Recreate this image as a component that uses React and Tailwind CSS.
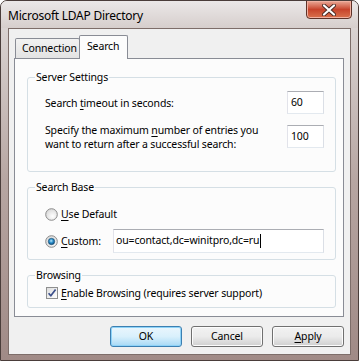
import React from "react";

const font = { fontFamily: '"Noto Sans", "Open Sans", Arial, sans-serif' };
const T = "text-[10.5px] tracking-[-0.15px] text-black";

function Radio({ checked }) {
  return (
    <svg width="13" height="13" viewBox="0 0 13 13" className="shrink-0">
      <defs>
        <radialGradient id={checked ? "rg1" : "rg0"} cx="0.6" cy="0.65" r="0.7">
          <stop offset="0" stopColor="#ffffff" />
          <stop offset="1" stopColor="#d6d6d6" />
        </radialGradient>
        <radialGradient id="rdot" cx="0.45" cy="0.4" r="0.6">
          <stop offset="0" stopColor="#b8e6fb" />
          <stop offset="0.5" stopColor="#2a8fcb" />
          <stop offset="1" stopColor="#0d4a7a" />
        </radialGradient>
      </defs>
      <circle cx="6.5" cy="6.5" r="5.8" fill={`url(#${checked ? "rg1" : "rg0"})`} stroke="#8a8a8a" strokeWidth="1" />
      {checked && <circle cx="6.5" cy="6.5" r="3.2" fill="url(#rdot)" stroke="#1b4f73" strokeWidth="0.6" />}
    </svg>
  );
}

function Checkbox() {
  return (
    <svg width="12" height="12" viewBox="0 0 12 12" className="shrink-0">
      <defs>
        <linearGradient id="cbg" x1="0" y1="0" x2="1" y2="1">
          <stop offset="0" stopColor="#dcdcdc" />
          <stop offset="1" stopColor="#ffffff" />
        </linearGradient>
      </defs>
      <rect x="0.5" y="0.5" width="11" height="11" fill="url(#cbg)" stroke="#8e8f8f" />
      <path d="M2.6 6.2 L4.8 8.8 L9.6 2.4" fill="none" stroke="#3b4f8a" strokeWidth="1.7" strokeLinejoin="round" />
    </svg>
  );
}

function Group({ title, className, children }) {
  return (
    <div className={`flex flex-col border border-[#d5dfe5] rounded-[3px] ${className}`}>
      <span className={`-mt-[8px] ml-[7px] self-start px-[1px] bg-[#fcfcfc] leading-[15px] ${T}`}>{title}</span>
      {children}
    </div>
  );
}

function Button({ children, def }) {
  return (
    <div
      className={`w-[72px] h-[21px] flex items-center justify-center rounded-[3px] border ${T} ${
        def
          ? "border-[#3c7fb1] bg-gradient-to-b from-[#eaf6fd] via-[#d9f0fc] to-[#a7d9f5] shadow-[inset_0_0_0_1px_#8ed3f8]"
          : "border-[#707070] bg-gradient-to-b from-[#f2f2f2] via-[#ebebeb] to-[#cfcfcf] shadow-[inset_0_0_0_1px_#fcfcfc]"
      }`}
    >
      {children}
    </div>
  );
}

const INPUT =
  "border border-[#abadb3] border-l-[#e2e3ea] border-b-[#e3e9ef] border-r-[#dbdfe6] bg-white flex items-center";

export default function App() {
  return (
    <div
      className="w-[359px] h-[361px] flex flex-col border border-[#4a3d3a] rounded-t-[7px] bg-gradient-to-b from-[#e0dbda] via-[#b7a6a2] to-[#a08a86] overflow-hidden"
      style={font}
    >
      <div className="h-[27px] shrink-0 flex items-start justify-between bg-gradient-to-b from-[#ebe8e8] to-[#d6cecc]">
        <span className="pl-[7px] pt-[6px] text-[12px] tracking-[-0.25px] leading-[17px] text-black">
          Microsoft LDAP Directory
        </span>
        <div className="mr-[6px] -mt-[1px] w-[46px] h-[19px] rounded-b-[4px] border border-[#5e3228] bg-gradient-to-b from-[#e9a897] via-[#c7432b] to-[#d9714d] flex items-center justify-center shadow-[inset_0_0_0_1px_#f0b0a0]">
          <svg width="14" height="12" viewBox="0 0 14 12">
            <path d="M2 1.5 L12 10.5 M12 1.5 L2 10.5" stroke="#4a2a24" strokeWidth="4" strokeLinecap="round" />
            <path d="M2 1.5 L12 10.5 M12 1.5 L2 10.5" stroke="#ffffff" strokeWidth="2.2" strokeLinecap="round" />
          </svg>
        </div>
      </div>

      <div className="mx-[7px] h-[327px] shrink-0 flex flex-col border border-[#7d6d69] bg-[#f0f0f0]">
        <div className="ml-[5px] mr-[6px] mt-[6px] flex flex-col">
          <div className="flex items-end pl-[1px] h-[23px]">
            <div className={`w-[65px] h-[20px] border border-b-0 border-[#898c95] rounded-t-[2px] bg-gradient-to-b from-[#f2f2f2] to-[#e3e3e3] flex items-center pl-[6px] ${T}`}>
              Connection
            </div>
            <div className={`relative z-10 -ml-[1px] -mb-[1px] w-[49px] h-[24px] border border-b-0 border-[#898c95] rounded-t-[2px] bg-[#fcfcfc] flex items-center pl-[7px] pb-[2px] ${T}`}>
              Search
            </div>
          </div>

          <div className="h-[259px] border border-[#898c95] bg-[#fcfcfc] flex flex-col pl-[12px] pr-[7px] pt-[18px]">
            <Group title="Server Settings" className="h-[95px]">
              <div className="mt-[6px] flex items-center justify-between pl-[17px] pr-[11px] h-[23px]">
                <span className={`leading-[14px] ${T}`}>
                  Search <u className="underline-offset-2">t</u>imeout in seconds:
                </span>
                <div className={`w-[37px] h-[23px] pl-[3px] ${INPUT} ${T}`}>60</div>
              </div>
              <div className="mt-[11px] flex items-center justify-between pl-[17px] pr-[11px] h-[23px]">
                <span className={`leading-[14px] ${T}`}>
                  Specify the maximum <u className="underline-offset-2">n</u>umber of entries you
                  <br />
                  want to return after a successful search:
                </span>
                <div className={`w-[37px] h-[23px] pl-[3px] ${INPUT} ${T}`}>100</div>
              </div>
            </Group>

            <Group title="Search Base" className="mt-[15px] h-[73px]">
              <div className="mt-[11px] flex items-center gap-[3px] pl-[17px] h-[16px]">
                <Radio />
                <span className={`leading-[14px] ${T}`}>
                  <u className="underline-offset-2">U</u>se Default
                </span>
              </div>
              <div className="mt-[7px] flex items-center pl-[17px] pr-[11px] h-[24px]">
                <div className="flex items-center gap-[3px]">
                  <Radio checked />
                  <span className={`leading-[14px] ${T}`}>
                    <u className="underline-offset-2">C</u>ustom:
                  </span>
                </div>
                <div className={`ml-auto w-[211px] h-[24px] pl-[2px] ${INPUT} ${T}`}>
                  ou=contact,dc=winitpro,dc=ru
                  <span className="ml-[1px] w-[1px] h-[14px] bg-black" />
                </div>
              </div>
            </Group>

            <Group title="Browsing" className="mt-[15px] h-[33px]">
              <div className="mt-[3px] flex items-center gap-[3px] pl-[18px] h-[14px]">
                <Checkbox />
                <span className={`leading-[14px] ${T}`}>
                  <u className="underline-offset-2">E</u>nable Browsing (requires server support)
                </span>
              </div>
            </Group>
          </div>

          <div className="mt-[9px] flex justify-end gap-[9px]">
            <Button def>OK</Button>
            <Button>Cancel</Button>
            <Button>
              <span>
                <u className="underline-offset-2">A</u>pply
              </span>
            </Button>
          </div>
        </div>
      </div>
    </div>
  );
}
